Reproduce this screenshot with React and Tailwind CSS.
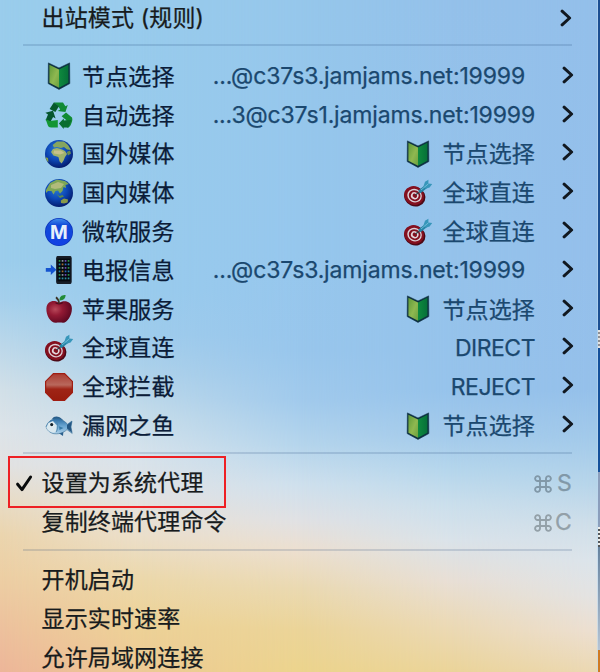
import React from "react";

function Book() {
  return (
    <svg viewBox="0 0 28 28" className="h-7 w-7 shrink-0">
      <defs>
        <linearGradient id="bookLeft" x1="0" y1="0" x2="1" y2="1">
          <stop offset="0" stopColor="#5f9a3a" />
          <stop offset="0.55" stopColor="#8fb850" />
          <stop offset="1" stopColor="#6aa03e" />
        </linearGradient>
        <linearGradient id="bookRight" x1="0" y1="0" x2="1" y2="0">
          <stop offset="0" stopColor="#0f8a3e" />
          <stop offset="1" stopColor="#067038" />
        </linearGradient>
      </defs>
      <path d="M3.4 0.9 L14 6 L24.6 0.9 L24.8 21.6 L14 27.4 L3.2 21.6Z" fill="#0c2f3f" stroke="#0c2f3f" strokeWidth="0.6" strokeLinejoin="round" />
      <path d="M4.4 2.8 L14 7.6 V25.8 L4.4 20.7Z" fill="url(#bookLeft)" />
      <path d="M23.4 2.8 L14 7.6 V25.8 L23.4 20.7Z" fill="url(#bookRight)" />
    </svg>
  );
}

function Recycle() {
  return (
    <svg viewBox="0 0 28 28" className="h-7 w-7 shrink-0">
      <path d="M8.8 1.6 H18 L20.4 5.2 L22.8 4 L20.4 11 L12.6 10 L15.2 8.4 L13.4 5.4Z" fill="#118a35" />
      <path d="M8.8 1.6 L14 5.2 L10.4 11 L4.6 8Z" fill="#075a2c" />
      <path d="M0.4 11.8 L8 9.8 L10.6 17.4 L8.1 16 L5.6 20.4 L0.6 19.2 L3 13.5Z" fill="#06562e" />
      <path d="M0.6 18 L4.8 20 L12.8 19 V26.6 H6.1 C4.3 26.6 3.4 25.6 2.8 24.3Z" fill="#149634" />
      <path d="M21 11.4 L27 16.6 C27.9 19.2 27 21 25.6 24.3 C24.7 25.9 23.8 26.6 22 26.6 L18.8 20.1 L21.8 19.4 L16.6 15.2Z" fill="#118b33" />
      <path d="M13.9 22.5 L18.7 17.6 L18.9 19.5 L26.4 19 L23.4 26.5 L18.7 26.6 V28Z" fill="#0a6e2f" />
    </svg>
  );
}

function Globe({ asia }) {
  return (
    <svg viewBox="0 0 28 28" className="h-7 w-7 shrink-0">
      <defs>
        <radialGradient id="sea" cx="0.42" cy="0.35" r="0.65">
          <stop offset="0" stopColor="#2b7bd0" />
          <stop offset="0.55" stopColor="#0d49b8" />
          <stop offset="1" stopColor="#041c6f" />
        </radialGradient>
        <clipPath id="globeClip"><circle cx="14" cy="14" r="13.8" /></clipPath>
      </defs>
      <circle cx="14" cy="14" r="14" fill="url(#sea)" />
      {asia ? (
        <g clipPath="url(#globeClip)">
          <path d="M1 11 L5 4 L12 0.5 L20 2 L24 5 L20.5 6 L21 9 L18.5 8 L17.5 12 L15 14.5 L13 11.5 L10.5 12 L8.5 15.5 L6.5 12 L3 12 L1 14Z" fill="#7da656" />
          <path d="M6 6 L13 3 L19 5 L16 9 L10 10 L6 9Z" fill="#b1bb7b" />
          <path d="M11.5 15 L14.5 17 L17.5 16 L19 17.6 L15 19Z" fill="#5e8a49" />
          <path d="M15.8 21.6 L19 19.4 L23 20.4 L22.6 23.4 L19 24.6 L16 24Z" fill="#8a9a48" />
        </g>
      ) : (
        <g clipPath="url(#globeClip)">
          <path d="M7.6 5 L12 1.5 L19 1.6 L23 5 L26 10 L22 9.6 L19 7 L16 8 L12 7 L9 7.4Z" fill="#86a55f" />
          <path d="M8 9 L12 8 L17 9.5 L20 11 L22 14 L20 17 L18.6 20.6 L16.6 23.5 L14.6 21.4 L13.4 17 L8.4 15.6 L6 12Z" fill="#a0b26c" />
          <path d="M9 10.4 L16 10.4 L19.4 13 L15 14.6 L8.6 13.4Z" fill="#c6c18c" />
          <path d="M0 17 L3 18 L3.4 22 L0 20Z" fill="#86a049" />
          <path d="M21.8 12 L25 10.6 L26 13.6 L23 15.4Z" fill="#6a8c55" />
        </g>
      )}
    </svg>
  );
}

function MetroBadge() {
  return (
    <svg viewBox="0 0 28 28" className="h-7 w-7 shrink-0">
      <defs>
        <linearGradient id="badge" x1="0" y1="0" x2="0" y2="1">
          <stop offset="0" stopColor="#3f8bea" />
          <stop offset="0.25" stopColor="#1149d8" />
          <stop offset="1" stopColor="#1240e4" />
        </linearGradient>
      </defs>
      <circle cx="14" cy="14" r="14" fill="#0b35bd" />
      <circle cx="14" cy="14" r="13.2" fill="url(#badge)" />
      <text x="14" y="20.8" textAnchor="middle" fill="#e6effb" className="font-[Inter] text-[19px] font-bold">M</text>
    </svg>
  );
}

const appColors = ["#31a84c", "#3478dc", "#9aa6b2", "#2a9cc9", "#7c56c9", "#bd8036"];

function Phone() {
  const dots = [];
  for (let row = 0; row < 6; row += 1) {
    for (let col = 0; col < 4; col += 1) {
      dots.push(
        <rect key={`${row}-${col}`} x={13.7 + col * 3} y={4 + row * 3.5} width="1.7" height="1.8" opacity="0.85" fill={row === 5 ? "#35a3b4" : appColors[(row * 3 + col * 2) % 6]} />
      );
    }
  }
  return (
    <svg viewBox="0 0 28 28" className="h-7 w-7 shrink-0">
      <rect x="11.1" y="-0.2" width="15.6" height="28.4" rx="2.4" fill="#161c26" />
      <rect x="12.5" y="2.6" width="12.8" height="22.7" fill="#04080f" />
      {dots}
      <path d="M0.8 12 H5.8 V8.6 L11.4 13.8 L5.8 19 V15.8 H0.8Z" fill="#1554cf" />
    </svg>
  );
}

function Apple() {
  return (
    <svg viewBox="0 0 28 28" className="h-7 w-7 shrink-0">
      <defs>
        <radialGradient id="apple" cx="0.35" cy="0.38" r="0.7">
          <stop offset="0" stopColor="#b8485a" />
          <stop offset="0.4" stopColor="#931a34" />
          <stop offset="1" stopColor="#590720" />
        </radialGradient>
      </defs>
      <path d="M14 7.8 C18 5 26.8 5 26.9 13.6 C27 20.8 22 28 18 27.8 C16 27.4 13 27.4 11 27.8 C5.5 28 1 20 1.4 13.4 C1.9 5.2 10 4.8 14 7.8Z" fill="url(#apple)" />
      <path d="M10.5 7.6 C12 9.2 16 9.2 17.8 7.6" stroke="#4f0a1d" strokeWidth="1.3" fill="none" />
      <path d="M14 8.6 C14 5.6 12.7 3.6 11 2.2" stroke="#3a3226" strokeWidth="1.8" fill="none" />
      <path d="M14.4 5.4 C14.4 1.4 17 -0.2 20.6 0 C20.5 3.5 18.2 5.7 14.4 5.4Z" fill="#228b37" />
    </svg>
  );
}

function Dart() {
  return (
    <svg viewBox="0 0 28 28" className="h-7 w-7 shrink-0 overflow-visible">
      <g transform="rotate(24 10.5 16.5)">
        <ellipse cx="11.2" cy="17.4" rx="10.9" ry="9.7" fill="#4b0916" />
        <ellipse cx="10.1" cy="16.7" rx="10.2" ry="9.2" fill="#84101f" />
        <ellipse cx="10.6" cy="16.6" rx="7.4" ry="6.7" fill="#dccfd6" />
        <ellipse cx="10.7" cy="16.6" rx="6" ry="5.4" fill="#84101f" />
        <ellipse cx="10.8" cy="16.6" rx="3.9" ry="3.5" fill="#e3d6dc" />
        <ellipse cx="10.9" cy="16.6" rx="2.3" ry="2" fill="#84101f" />
      </g>
      <path d="M11.5 16 L16.6 12" stroke="#34434c" strokeWidth="1.2" />
      <path d="M15.4 12.8 L22.6 7.2" stroke="#2484a6" strokeWidth="3.6" />
      <path d="M19.4 7.6 L21 2.8 L24.4 0.8 L24.4 4.4 L28.2 5 L25.6 8.4 L21.6 9.8Z" fill="#3796ba" />
      <path d="M17 11 L24.4 4.8" stroke="#7cc4dc" strokeWidth="0.8" />
    </svg>
  );
}

function StopSign() {
  return (
    <svg viewBox="0 0 28 28" className="h-7 w-7 shrink-0">
      <defs>
        <linearGradient id="stop" x1="0" y1="0" x2="0" y2="1">
          <stop offset="0" stopColor="#a93c32" />
          <stop offset="0.42" stopColor="#b9685c" />
          <stop offset="0.58" stopColor="#9f2416" />
          <stop offset="1" stopColor="#981c0d" />
        </linearGradient>
      </defs>
      <path d="M8.4 0.6 H19.6 L27.4 8.4 V19.6 L19.6 27.4 H8.4 L0.6 19.6 V8.4Z" fill="url(#stop)" stroke="#a01d12" strokeWidth="1.2" />
    </svg>
  );
}

function Fish() {
  return (
    <svg viewBox="0 0 28 28" className="h-7 w-7 shrink-0">
      <defs>
        <linearGradient id="fish" x1="0" y1="0" x2="0" y2="1">
          <stop offset="0" stopColor="#2a6aa0" />
          <stop offset="0.5" stopColor="#6aa6d2" />
          <stop offset="1" stopColor="#a9cde6" />
        </linearGradient>
      </defs>
      <path d="M7 7 C9 3.6 14 3.6 18 8Z M12 20 L18 24 L18.5 18Z" fill="#2a5f8c" />
      <path d="M1 14.8 C3.5 8 9 5.6 14.3 6.7 C18 7.8 21 10.6 22.5 12.2 L27 9 L26 15 L27.2 21.4 L22 17.6 C18 21.2 13 22.5 8 21.5 C4.5 20.6 2 18 1 14.8Z" fill="url(#fish)" stroke="#336a92" strokeWidth="0.6" />
      <path d="M22 13 L26.8 9.6 L25.8 15 L27 20.8 L22 16.6Z" fill="#255783" />
      <path d="M1.4 15.5 C3 20 8 21.8 11 20 L11.8 13.5 L8 9 L3.4 11Z" fill="#d9e8ef" />
      <circle cx="6.7" cy="12.6" r="2.2" fill="#f3f7f7" />
      <circle cx="6.7" cy="12.6" r="1.6" fill="#11212c" />
      <path d="M11.2 9.5 C13.4 12.6 13.2 17 11 20" stroke="#4a80a6" strokeWidth="0.8" fill="none" />
      <path d="M14 14.2 L18.5 16 L14.5 18Z" fill="#367aa8" />
    </svg>
  );
}

function Chevron() {
  return (
    <svg viewBox="0 0 12 18" className="h-[18px] w-3 shrink-0" fill="none" stroke="#111820" strokeWidth="3" strokeLinecap="round" strokeLinejoin="round">
      <path d="M2.1 2.2 L9.6 9 L2.1 15.8" />
    </svg>
  );
}

function Separator() {
  return <div className="mr-[28px] ml-[23px] h-[2px] bg-[#17406f]/16" />;
}

const groups = [
  { icon: <Book />, name: "节点选择", node: "...@c37s3.jamjams.net:19999", inset: true },
  { icon: <Recycle />, name: "自动选择", node: "...3@c37s1.jamjams.net:19999" },
  { icon: <Globe />, name: "国外媒体", picked: "节点选择", pickedIcon: <Book /> },
  { icon: <Globe asia />, name: "国内媒体", picked: "全球直连", pickedIcon: <Dart /> },
  { icon: <MetroBadge />, name: "微软服务", picked: "全球直连", pickedIcon: <Dart /> },
  { icon: <Phone />, name: "电报信息", node: "...@c37s3.jamjams.net:19999", inset: true },
  { icon: <Apple />, name: "苹果服务", picked: "节点选择", pickedIcon: <Book /> },
  { icon: <Dart />, name: "全球直连", policy: "DIRECT" },
  { icon: <StopSign />, name: "全球拦截", policy: "REJECT" },
  { icon: <Fish />, name: "漏网之鱼", picked: "节点选择", pickedIcon: <Book /> },
];

function GroupRow({ group }) {
  return (
    <div className="flex h-[38.8px] items-center pr-[26px] pl-[45px]">
      {group.icon}
      <span className="mt-[2px] ml-[9px] text-[#0b1c38]">{group.name}</span>
      <div className="flex flex-1 items-center justify-end text-[#1b486f]">
        {group.node && <span className={group.inset ? "mt-px mr-[10px] tracking-[-0.16px]" : "mt-px tracking-[-0.16px]"}>{group.node}</span>}
        {group.policy && <span className="mt-[2px] tracking-[-0.5px]">{group.policy}</span>}
        {group.pickedIcon}
        {group.picked && <span className="mt-[2px] ml-[10px]">{group.picked}</span>}
      </div>
      <div className="-mt-[3px] ml-[27px] flex"><Chevron /></div>
    </div>
  );
}

function Shortcut({ letter }) {
  return (
    <span className="mt-[2px] ml-auto flex items-center">
      <svg viewBox="0 0 18 18" className="h-[18px] w-[18px]" fill="none" stroke="currentColor" strokeWidth="1.9">
        <path d="M6 6 H12 V12 H6Z M6 6 H3.7 A2.45 2.45 0 1 1 6 3.7Z M12 6 V3.7 A2.45 2.45 0 1 1 14.3 6Z M12 12 H14.3 A2.45 2.45 0 1 1 12 14.3Z M6 12 V14.3 A2.45 2.45 0 1 1 3.7 12Z" />
      </svg>
      <span className="flex w-5 justify-end">{letter}</span>
    </span>
  );
}

function Backdrop() {
  return (
    <div className="absolute inset-0 -z-10">
      <div className="absolute inset-0 bg-[linear-gradient(180deg,#9acdec_0px,#9bcdec_260px,#a5d0ec_300px,#bcd8ea_345px,#d2e0e8_390px,#dde4e9_430px,#e2e2e2_465px,#e8dcc6_500px,#ebd5ae_535px,#edcfa4_575px,#edc39e_620px,#edb699_672px)]" />
      <div className="absolute inset-0 bg-[linear-gradient(180deg,#98cbec_0px,#99cbed_290px,#9fccec_335px,#afd2ea_375px,#c5dcea_415px,#d7e3ec_455px,#e2e2e3_495px,#ebdfcb_535px,#ecd8aa_580px,#edd297_625px,#edca95_672px)] [mask-image:linear-gradient(90deg,transparent_0px,black_140px)]" />
      <div className="absolute inset-0 bg-[linear-gradient(180deg,#96c7eb_0px,#96c7ed_250px,#98c6ec_350px,#a1caec_400px,#b5d5ec_445px,#cfe0ed_485px,#e0e1e4_520px,#ecdfd0_550px,#ead9b1_588px,#ebd498_630px,#ecd48d_672px)] [mask-image:linear-gradient(90deg,transparent_140px,black_300px)]" />
      <div className="absolute inset-0 bg-[linear-gradient(180deg,#94c1ea_0px,#95c3eb_250px,#96c3eb_390px,#a3caeb_435px,#b5d6ec_470px,#cbdfec_505px,#dae3ea_540px,#e8dfd6_580px,#ebdab9_620px,#ebd499_672px)] [mask-image:linear-gradient(90deg,transparent_300px,black_450px)]" />
      <div className="absolute inset-0 bg-[linear-gradient(180deg,#93bfea_0px,#94bfeb_250px,#95c0ea_390px,#a3caea_440px,#b7d5ea_485px,#cfdee9_525px,#dbe4eb_560px,#e3e3e3_595px,#ecdfd2_630px,#ebd8b3_672px)] [mask-image:linear-gradient(90deg,transparent_450px,black_597px)]" />
    </div>
  );
}

function WindowEdge() {
  return (
    <div className="absolute inset-y-0 right-0 flex w-[3px]">
      <div className="w-px bg-[#bdd8ef]/60" />
      <div className="flex w-[2px] flex-col">
        <div className="h-[330px] bg-[#1c4f92]" />
        <div className="h-[18px] bg-[repeating-linear-gradient(180deg,#e3e3e2_0px,#e3e3e2_2px,#8d8f94_2px,#8d8f94_4px)]" />
        <div className="h-[124px] bg-[#14509b]" />
        <div className="h-[55px] bg-[#8b9ebc]" />
        <div className="h-[20px] bg-[repeating-linear-gradient(180deg,#eeeeeb_0px,#eeeeeb_2px,#53565a_2px,#53565a_4px)]" />
        <div className="h-[103px] bg-[linear-gradient(180deg,#66829f,#b5c4d5)]" />
        <div className="flex-1 bg-[#cf7a24]" />
      </div>
    </div>
  );
}

export default function App() {
  return (
    <div className="relative isolate h-[672px] w-[600px] overflow-hidden font-[Inter,'Noto_Sans_CJK_SC',sans-serif] text-[23px] leading-none tracking-[0.15px] whitespace-nowrap text-[#171b1d] [-webkit-text-stroke:0.25px_currentColor]">
      <Backdrop />
      <div className="flex h-[36px] items-center justify-between pr-[28px] pl-[41.5px]">
        <span>出站模式 (规则)</span>
        <Chevron />
      </div>
      <div className="pt-[8px] pb-[11px]"><Separator /></div>
      {groups.map((group) => <GroupRow key={group.name} group={group} />)}
      <div className="pt-[7px] pb-[9.5px]"><Separator /></div>
      <div className="relative flex h-[38.8px] items-center pr-[28px] pl-[14px]">
        <svg viewBox="0 0 20 20" className="mr-[7.5px] h-5 w-5" fill="none" stroke="#090b0c" strokeWidth="3" strokeLinecap="round" strokeLinejoin="round">
          <path d="M3.6 11.2 L8 16.6 L16.6 4" />
        </svg>
        <span className="mt-[2px]">设置为系统代理</span>
        <span className="ml-auto flex text-[#8198a8]"><Shortcut letter="S" /></span>
        <div className="absolute top-[-7.5px] left-[8px] h-[52px] w-[218px] border-2 border-[#ee2024]" />
      </div>
      <div className="flex h-[38.8px] items-center justify-between pr-[28px] pl-[41.5px]">
        <span className="mt-[2px]">复制终端代理命令</span>
        <span className="flex text-[#93a0a8]"><Shortcut letter="C" /></span>
      </div>
      <div className="pt-[7.5px] pb-[10px]"><Separator /></div>
      {["开机启动", "显示实时速率", "允许局域网连接"].map((label) => (
        <div key={label} className="flex h-[38.8px] items-center pl-[41.5px]"><span className="mt-[2px]">{label}</span></div>
      ))}
      <WindowEdge />
    </div>
  );
}
